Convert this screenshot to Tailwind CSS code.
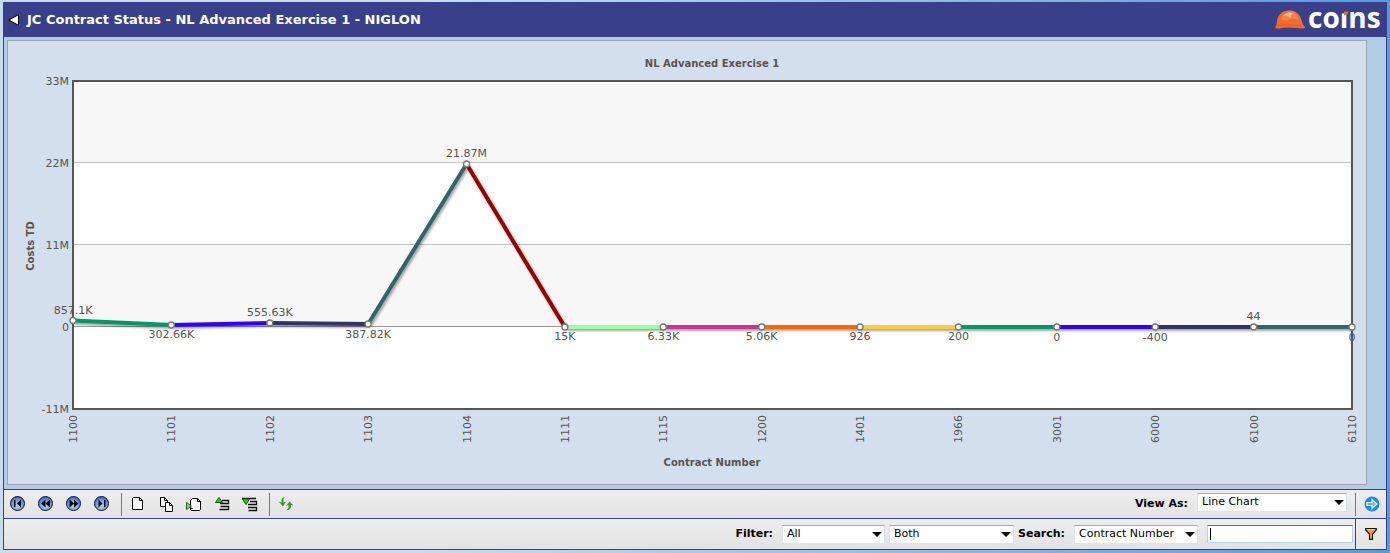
<!DOCTYPE html>
<html lang="en">
<head>
<meta charset="utf-8">
<meta name="viewport" content="width=device-width, initial-scale=1">
<title>JC Contract Status</title>
<script src="https://cdn.jsdelivr.net/npm/@tailwindcss/browser@4"></script>
</head>
<body class="min-h-screen bg-linear-to-r from-[#c9dcf0] from-30% to-[#559bdc] pt-[2px] pr-[3px] pb-[3px] pl-[3px] font-['Verdana','DejaVu_Sans',sans-serif] text-[11px] text-black">
<div class="flex flex-col border border-t-0 border-[#3a3f8c]">

  <header class="flex h-[35px] items-center justify-between bg-[#3a3f8a] pr-[5px] pl-[4px]">
    <div class="flex items-center gap-[8px]">
      <button type="button" aria-label="Back" class="block">
        <svg class="block" width="11" height="12" viewBox="0 0 11 12"><path d="M10.500 .7v10.600L.8 6z" fill="#fff" stroke="#000"/></svg>
      </button>
      <h1 class="text-[13px] font-bold text-white">JC Contract Status - NL Advanced Exercise 1 - NIGLON</h1>
    </div>
    <svg class="block overflow-visible" width="106" height="30" viewBox="0 1 106 30" role="img" aria-label="coins">
      <path d="M0 23.500Q2 21.500 2 17C3 10 8 6.500 14 6.500C21 6 26 11 27 18Q28 22 30.500 23.500Q28 25 22 24Q10 23 5 24.500Q1 25 0 23.500Z" fill="#f26a2e"/>
      <path d="M6 15C8 9 14 7 18 8Q23 11 24 17Q20 14 15 15Q10 18 6 15Z" fill="#f6844c"/>
      <path d="M8 12Q12 7 18 9Q15 12 16 14Q12 11 8 12Z" fill="#fbb48c"/>
      <path d="M2 22Q12 20 27 22" fill="none" stroke="#e55a24"/>
      <text x="33" y="24" font-family="Open Sans" font-weight="700" font-size="28" fill="#fff">coins</text>
      <path d="M66 0h7.500v9.500H66z" fill="#3a3f8a"/>
      <path d="M69 7.500h4.500l-1.500 3.500h-3z" fill="#f26a2e"/>
    </svg>
  </header>

  <main class="bg-[#b3cce6] pt-[3px] pr-[19px] pb-[4px] pl-[3px]">
    <div class="border border-[#9ca5ae] bg-[#d3dfed]">
      <svg class="block h-auto w-full" viewBox="8 41 1358 443" font-size="11" fill="#555" role="img" aria-label="Costs TD by Contract Number">
        <defs><filter id="shadow" x="0" y="100" width="1390" height="260" filterUnits="userSpaceOnUse"><feDropShadow dx="1.500" dy="2" stdDeviation="1" flood-opacity=".35"/></filter></defs>
        <path d="M73 81h1279v328H73z" fill="#fff"/>
        <path d="M73 81h1279v81H73zM73 244h1279v82H73z" fill="#f7f7f7"/>
        <path d="M73 162.500h1279M73 244.500h1279" stroke="#c3c3c3"/>
        <path d="M73 326.500h1279" stroke="#999"/>
        <path d="M73 81h1279v328H73z" fill="none" stroke="#555" stroke-width="2"/>
        <g text-anchor="middle" font-weight="700" font-size="10"><text x="712" y="67">NL Advanced Exercise 1</text><text x="712" y="466">Contract Number</text><text transform="translate(34 246) rotate(-90)">Costs TD</text></g>
        <g text-anchor="end"><text x="69" y="85">33M</text><text x="69" y="167">22M</text><text x="69" y="249">11M</text><text x="69" y="331">0</text><text x="69" y="413">-11M</text></g>
        <g id="lines" stroke-width="4" filter="url(#shadow)"></g>
        <g id="marks" fill="#fff" stroke="#777" stroke-width="1.300"></g>
        <g id="values" text-anchor="middle"></g>
        <g id="cats"></g>
      </svg>
    </div>
  </main>

  <div class="flex h-[29px] items-center justify-between border-t border-[#3a3f8c] bg-linear-to-b from-[#eeeeee] to-[#e2e2e2]">
    <div class="flex items-center">
      <svg width="0" height="0" class="absolute" aria-hidden="true"><defs><radialGradient id="ball" cx=".5" cy=".65" r=".6"><stop offset="0" stop-color="#b5d3fa"/><stop offset=".55" stop-color="#7aa7e8"/><stop offset="1" stop-color="#3d69c0"/></radialGradient></defs></svg>
      <button type="button" aria-label="First" class="flex h-[28px] w-[28px] items-center justify-center"><svg width="16" height="16" viewBox="0 0 16 16"><circle cx="7.500" cy="7.500" r="7" fill="url(#ball)" stroke="#10182c"/><path d="M4 4h1.500v7H4zM11 3.500v8l-4-4z"/></svg></button>
      <button type="button" aria-label="Previous" class="flex h-[28px] w-[28px] items-center justify-center"><svg width="16" height="16" viewBox="0 0 16 16"><circle cx="7.500" cy="7.500" r="7" fill="url(#ball)" stroke="#10182c"/><path d="M7.500 3.500v8l-4.500-4zM12 3.500v8l-4.500-4z"/></svg></button>
      <button type="button" aria-label="Next" class="flex h-[28px] w-[28px] items-center justify-center"><svg width="16" height="16" viewBox="0 0 16 16"><circle cx="7.500" cy="7.500" r="7" fill="url(#ball)" stroke="#10182c"/><path d="M3.500 3.500v8l4.500-4zM8 3.500v8l4.500-4z"/></svg></button>
      <button type="button" aria-label="Last" class="flex h-[28px] w-[28px] items-center justify-center"><svg width="16" height="16" viewBox="0 0 16 16"><circle cx="7.500" cy="7.500" r="7" fill="url(#ball)" stroke="#10182c"/><path d="M10 4h1.500v7H10zM4.500 3.500v8l4-4z"/></svg></button>
      <span class="mr-[2px] ml-[5px] h-[23px] w-px bg-[#777]"></span>
      <button type="button" aria-label="New" class="flex h-[28px] w-[28px] items-center justify-center"><svg width="16" height="16" viewBox="0 0 16 16"><path d="M3.500 1.500h6l3 3v9h-10v-11zM9.500 1.500v3h3" fill="#fff" stroke="#000"/></svg></button>
      <button type="button" aria-label="Copy" class="flex h-[28px] w-[28px] items-center justify-center"><svg width="16" height="16" viewBox="0 0 16 16" fill="#fff" stroke="#000"><path d="M2.500 1.500h4l3 3v6h-7zM6.500 1.500v3h3"/><path d="M7.500 6.500h4l3 3v6h-7zM11.500 6.500v3h3"/></svg></button>
      <button type="button" aria-label="Open" class="flex h-[28px] w-[28px] items-center justify-center"><svg width="16" height="16" viewBox="0 0 16 16"><path d="M6.500 2.500h5l3 3v8l-1 1h-8l-1-1v-9zM11.500 2.500v3h3" fill="#fff" stroke="#000"/><path d="M.5 6.500l5 3.500-5 3.500z" fill="#8fc98a" stroke="#2c5c28"/><path d="M4 11l3 1.500-3 1.500z"/></svg></button>
      <button type="button" aria-label="Move up" class="flex h-[28px] w-[28px] items-center justify-center"><svg width="16" height="16" viewBox="0 0 16 16"><path d="M8 4.500h6.500v3H6M6 7.500v0M6.500 10.500h8M6.500 10.500h8v3M5.500 13.500h9.500" fill="none" stroke="#111" stroke-width="1.300"/><path d="M1.500 6.500L5 1.500l3.500 5z" fill="#35d010" stroke="#164f0b"/></svg></button>
      <button type="button" aria-label="Move down" class="flex h-[28px] w-[28px] items-center justify-center"><svg width="16" height="16" viewBox="0 0 16 16"><path d="M0 2.500h14M8 5.500h6.500v3H6M6.500 11.500h8v3h-8M6 11.500h9" fill="none" stroke="#111" stroke-width="1.300"/><path d="M.5 3l3.500 5.500L7.500 3z" fill="#35d010" stroke="#164f0b"/></svg></button>
      <span class="mr-[2px] ml-[5px] h-[23px] w-px bg-[#777]"></span>
      <button type="button" aria-label="Refresh" class="flex h-[28px] w-[28px] items-center justify-center"><svg width="16" height="16" viewBox="0 0 16 16" fill="#3a9a22"><path d="M7 1L5.500 3v3.500L8 5.500 5 10.500 .8 5.800l2.700.7V3.500Q4 1.500 7 1z"/><path d="M8 14.500l2.500-2.500V9l-2.500.8L11.500 5.500l4 4-2.500-.5v2.500q-1 2.500-5 3z"/></svg></button>
    </div>
    <div class="flex items-center gap-[8px]">
      <label for="view" class="mr-px font-bold">View As:</label>
      <div class="relative -mt-[4px]">
        <select id="view" class="block h-[19px] w-[150px] appearance-none border border-[#dfe3ea] border-t-[#a9adb3] bg-white pl-[4px]"><option>Line Chart</option></select>
        <svg class="pointer-events-none absolute top-[7px] right-[3px]" width="10" height="5" viewBox="0 0 10 5"><path d="M0 0h10L5 5z"/></svg>
      </div>
      <div class="flex h-[28px] w-[31px] items-center">
        <span class="h-[23px] w-px bg-[#777]"></span>
        <button type="button" aria-label="Go" class="flex h-[28px] flex-1 items-center justify-center pl-[2px]"><svg width="16" height="16" viewBox="0 0 16 16"><circle cx="8" cy="8" r="7.500" fill="#1e8cf5"/><path d="M3 6.500h5V3.500L13 8l-5 4.500v-3H3z" fill="#6db7ff" stroke="#fff" stroke-width="1.200"/></svg></button>
      </div>
    </div>
  </div>

  <form class="flex h-[31px] items-center justify-end border-t border-[#3a3f8c] bg-linear-to-b from-[#eeeeee] to-[#e2e2e2]">
    <label for="filter" class="mr-[9px] font-bold">Filter:</label>
    <div class="relative mr-[4px]">
      <select id="filter" class="block h-[19px] w-[103px] appearance-none border border-[#dfe3ea] border-t-[#a9adb3] bg-white pl-[4px]"><option>All</option></select>
      <svg class="pointer-events-none absolute top-[7px] right-[3px]" width="10" height="5" viewBox="0 0 10 5"><path d="M0 0h10L5 5z"/></svg>
    </div>
    <div class="relative mr-[4px]">
      <select aria-label="Filter type" class="block h-[19px] w-[125px] appearance-none border border-[#dfe3ea] border-t-[#a9adb3] bg-white pl-[4px]"><option>Both</option></select>
      <svg class="pointer-events-none absolute top-[7px] right-[3px]" width="10" height="5" viewBox="0 0 10 5"><path d="M0 0h10L5 5z"/></svg>
    </div>
    <label for="search" class="mr-[9px] font-bold">Search:</label>
    <div class="relative mr-[9px]">
      <select aria-label="Search field" class="block h-[19px] w-[124px] appearance-none border border-[#dfe3ea] border-t-[#a9adb3] bg-white pl-[4px]"><option>Contract Number</option></select>
      <svg class="pointer-events-none absolute top-[7px] right-[3px]" width="10" height="5" viewBox="0 0 10 5"><path d="M0 0h10L5 5z"/></svg>
    </div>
    <div class="relative mr-[2px]">
      <input id="search" type="text" class="block h-[18px] w-[146px] border border-[#b5d4ea] border-t-[#3d7bad] bg-white px-[3px] outline-none">
      <span class="pointer-events-none absolute top-[3px] left-[3px] h-[12px] w-px bg-black"></span>
    </div>
    <button type="button" aria-label="Apply filter" class="flex h-[30px] w-[31px] items-center justify-center border-l border-[#3a3f8c]"><svg width="12" height="12" viewBox="0 0 12 12"><path d="M.7 .6h10.600v1.400L7.500 6v5.400h-3V6L.7 2z" fill="#f9a01b" stroke="#111" stroke-width="1.100"/><path d="M2 1.500h8" stroke="#fdd79a" stroke-width=".8"/></svg></button>
  </form>
</div>

<script>
  // category, plotted y, value label, label baseline
  const data = [
    ['1100', 320.5, '857.1K', 314], ['1101', 325, '302.66K', 338], ['1102', 323, '555.63K', 316],
    ['1103', 324, '387.82K', 338], ['1104', 164, '21.87M', 157], ['1111', 327, '15K', 340],
    ['1115', 327, '6.33K', 340], ['1200', 327, '5.06K', 340], ['1401', 327, '926', 340],
    ['1966', 327, '200', 340], ['3001', 327, '0', 341], ['6000', 327, '-400', 341],
    ['6100', 327, '44', 320], ['6110', 327, '0', 341]
  ];
  const colours = ['#009966', '#3300ff', '#333366', '#336666', '#990000', '#99ff99', '#cc3399', '#ff6600', '#ffcc33'];
  const add = (parent, tag, attrs, text) => {
    const el = document.createElementNS('http://www.w3.org/2000/svg', tag);
    for (const k in attrs) el.setAttribute(k, attrs[k]);
    if (text) el.textContent = text;
    document.getElementById(parent).appendChild(el);
  };
  const px = i => 73 + i * 1279 / 13;
  data.forEach(([cat, y, label, base], i) => {
    if (i < data.length - 1)
      add('lines', 'path', { d: `M${px(i)} ${y}L${px(i + 1)} ${data[i + 1][1]}`, stroke: colours[i % 9] });
    add('marks', 'circle', { cx: px(i), cy: y, r: 3 });
    add('values', 'text', { x: px(i), y: base }, label);
    add('cats', 'text', { transform: `translate(${px(i) + 4} 443) rotate(-90)` }, cat);
  });
</script>
</body>
</html>
